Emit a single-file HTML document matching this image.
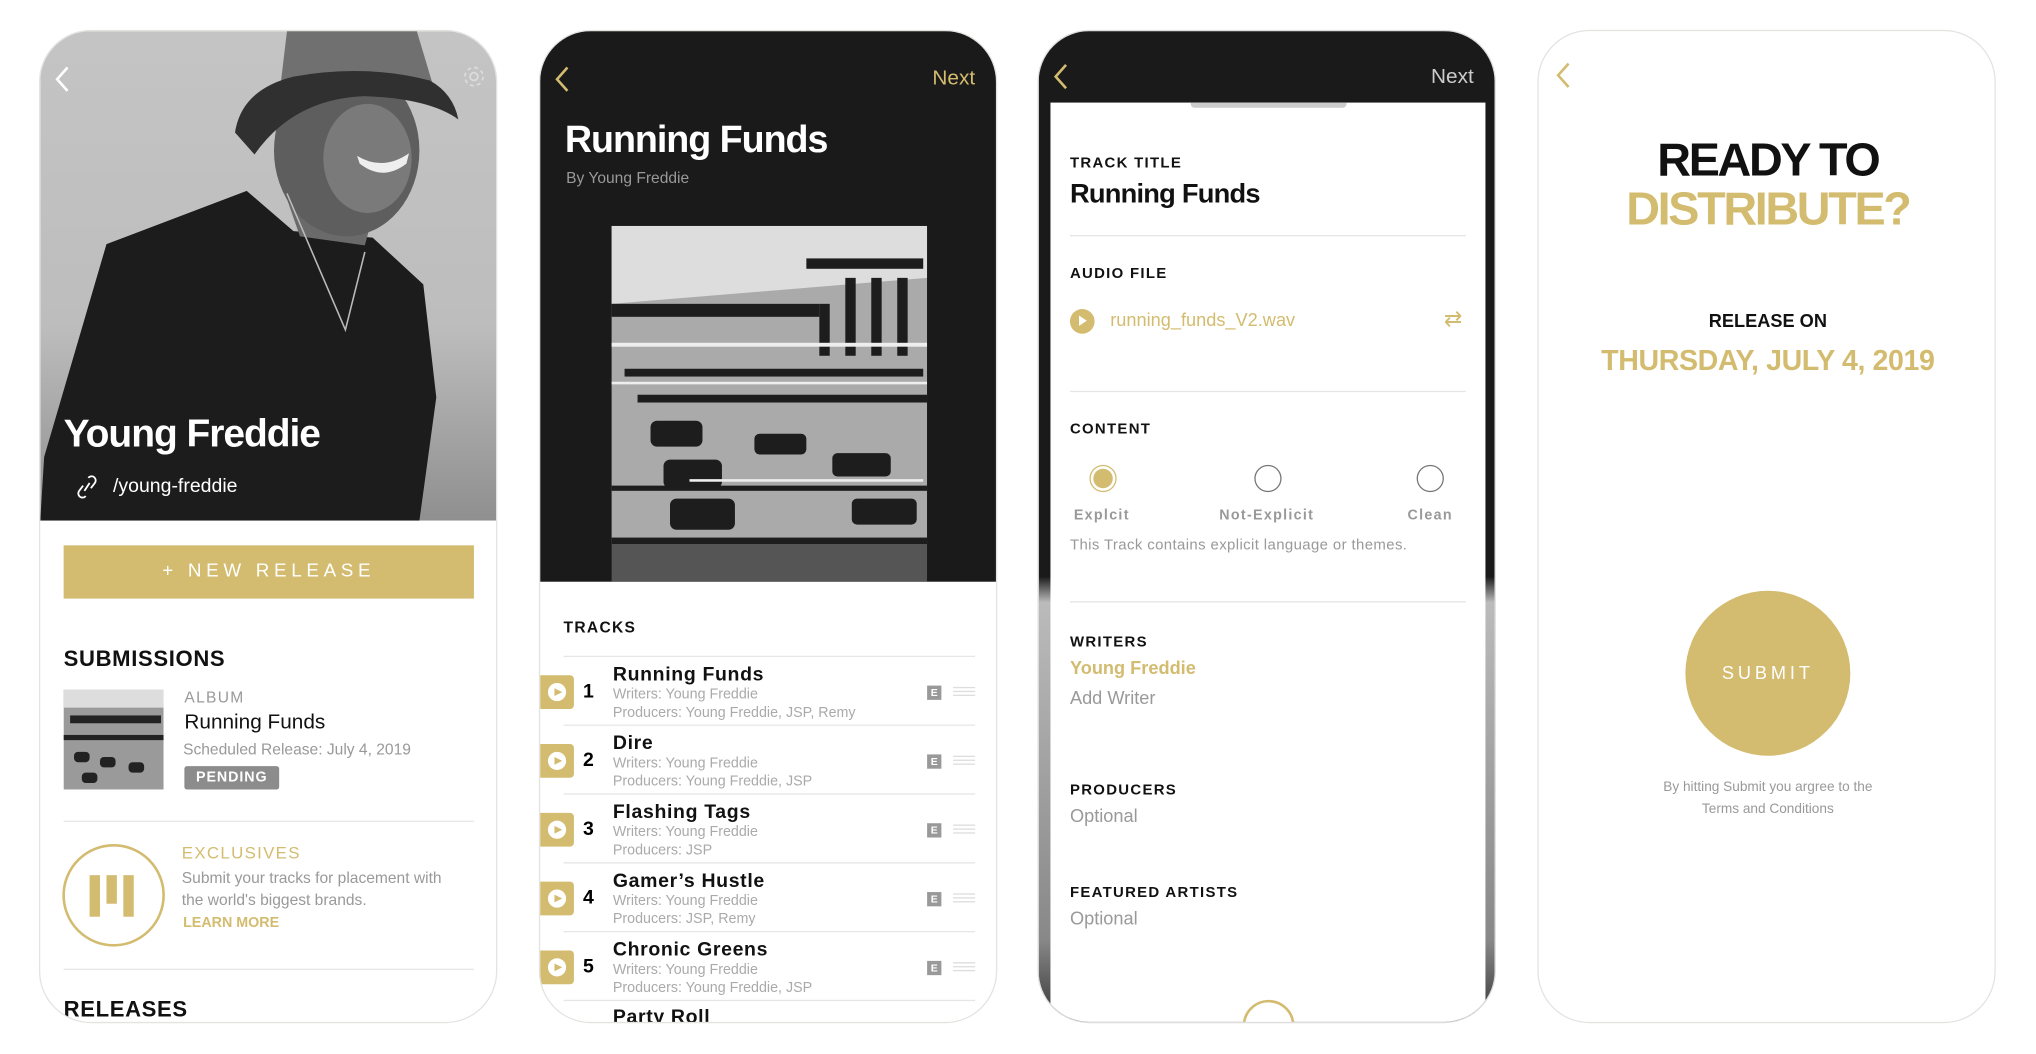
<!DOCTYPE html>
<html><head><meta charset="utf-8"><style>
*{margin:0;padding:0;box-sizing:border-box}
html,body{width:2036px;height:1054px;overflow:hidden;background:#fff}
body{font-family:"Liberation Sans",sans-serif}
#w{position:absolute;left:0;top:0;width:1568px;height:812px;transform:scale(1.29847);transform-origin:0 0}
.ph{position:absolute;top:23px;width:353px;height:765px;border-radius:40px;overflow:hidden;border:1px solid #e3e3e0;background:#fff}
.a{position:absolute;white-space:nowrap}
.g{color:#d3bc6f}
.lab{font-weight:bold;font-size:11.5px;letter-spacing:1px;color:#111}
.dv{position:absolute;height:1px;background:#e6e6e6}
.trk .tab{position:absolute;left:0;width:26px;height:26px;background:#d3bc6f;border-radius:0 3px 3px 0}
.trk .tab i{position:absolute;left:6px;top:6px;width:14px;height:14px;border-radius:50%;background:#fff}
.trk .tab i:after{content:"";position:absolute;left:5px;top:3.5px;border-left:6px solid #d3bc6f;border-top:3.5px solid transparent;border-bottom:3.5px solid transparent}
.eb{position:absolute;left:298px;width:11px;height:11px;background:#999;color:#fff;font-size:8px;font-weight:bold;text-align:center;line-height:11px}
.hb{position:absolute;left:318px;width:17px;height:7px;border-top:1px solid #ddd;border-bottom:1px solid #ddd}
.hb:after{content:"";position:absolute;left:0;top:2px;width:17px;border-top:1px solid #ddd}
</style></head><body><div id="w">

<!-- Phone 1 -->
<div class="ph" style="left:30px">
<svg class="a" style="left:0;top:0" width="353" height="377" viewBox="0 0 353 377">
<defs><linearGradient id="bg1" x1="0" y1="0" x2="0" y2="1"><stop offset="0" stop-color="#c4c4c4"/><stop offset="0.6" stop-color="#bdbdbd"/><stop offset="1" stop-color="#8f8f8f"/></linearGradient></defs>
<rect width="353" height="377" fill="url(#bg1)"/>
<path d="M3 328 L51 164 L159 123 L195 154 L256 159 L295 195 L305 282 L292 377 L0 377 Z" fill="#1c1c1c"/>
<path d="M185 115 L200 158 L250 165 L258 135 L235 115 Z" fill="#6a6a6a"/>
<ellipse cx="236" cy="92" rx="56" ry="66" fill="#5e5e5e"/>
<ellipse cx="252" cy="98" rx="34" ry="42" fill="#7a7a7a"/>
<path d="M244 96 Q264 108 284 94 L282 102 Q264 116 246 102 Z" fill="#eee"/>
<path d="M190 0 L290 0 L302 40 Q245 30 185 42 Z" fill="#707070"/>
<path d="M150 78 Q155 45 195 35 Q250 25 300 38 Q318 48 322 68 Q300 52 250 50 Q195 52 165 95 Z" fill="#303030"/>
<path d="M190 125 L235 230 L250 170" stroke="#bbb" stroke-width="1.2" fill="none"/>
</svg>
<svg class="a" style="left:10px;top:27px" width="14" height="20"><path d="M11 1 L3 10 L11 19" stroke="#fff" stroke-width="2" fill="none"/></svg>
<svg class="a" style="left:324px;top:25px" width="20" height="20" viewBox="0 0 20 20"><circle cx="10" cy="10" r="3" stroke="#ddd" stroke-width="1.3" fill="none"/><circle cx="10" cy="10" r="7" stroke="#ddd" stroke-width="1.3" fill="none" stroke-dasharray="3 2.5"/></svg>
<div class="a" style="left:18px;top:294px;font-size:30px;font-weight:bold;color:#fff;letter-spacing:-0.8px">Young Freddie</div>
<svg class="a" style="left:28px;top:342px" width="16" height="18" viewBox="0 0 16 18"><path d="M9 2 a3 3 0 0 1 5 4 L11 10 M7 16 a3 3 0 0 1 -5 -4 L5 8 M6 12 L10 6" stroke="#fff" stroke-width="1.4" fill="none"/></svg>
<div class="a" style="left:56px;top:342px;font-size:15px;color:#fff">/young-freddie</div>
<div class="a" style="left:18px;top:396px;width:316px;height:41px;background:#d3bc6f;color:#fff;font-size:14.5px;letter-spacing:3.6px;text-align:center;line-height:41px">+ NEW RELEASE</div>
<div class="a" style="left:18px;top:474px;font-size:17px;font-weight:bold;color:#111;letter-spacing:0.5px">SUBMISSIONS</div>
<svg class="a" style="left:18px;top:507px" width="77" height="77" viewBox="0 0 77 77"><rect width="77" height="77" fill="#9a9a9a"/><g fill="#222"><rect x="5" y="20" width="70" height="6"/><rect x="0" y="35" width="77" height="4"/><rect x="8" y="48" width="12" height="8" rx="3"/><rect x="28" y="52" width="12" height="8" rx="3"/><rect x="50" y="56" width="12" height="8" rx="3"/><rect x="14" y="64" width="12" height="8" rx="3"/></g><rect x="0" y="0" width="77" height="14" fill="#ddd"/></svg>
<div class="a" style="left:111px;top:506px;font-size:12px;color:#999;letter-spacing:1px">ALBUM</div>
<div class="a" style="left:111px;top:524px;font-size:16px;color:#111">Running Funds</div>
<div class="a" style="left:110px;top:546px;font-size:12px;color:#999">Scheduled Release: July 4, 2019</div>
<div class="a" style="left:111px;top:566px;width:73px;height:18px;background:#8c8c8c;border-radius:2px;color:#fff;font-size:11px;font-weight:bold;letter-spacing:0.7px;text-align:center;line-height:18px">PENDING</div>
<div class="dv" style="left:18px;top:608px;width:316px"></div>
<div class="a" style="left:17px;top:626px;width:79px;height:79px;border:2px solid #d3bc6f;border-radius:50%"></div>
<div class="a" style="left:38px;top:650px;width:8px;height:32px;background:#d3bc6f"></div>
<div class="a" style="left:51px;top:650px;width:8px;height:22px;background:#d3bc6f"></div>
<div class="a" style="left:64px;top:650px;width:8px;height:32px;background:#d3bc6f"></div>
<div class="a g" style="left:109px;top:625px;font-size:13px;letter-spacing:1px">EXCLUSIVES</div>
<div class="a" style="left:109px;top:644px;font-size:12px;color:#999;line-height:17px">Submit your tracks for placement with<br>the world's biggest brands.</div>
<div class="a g" style="left:110px;top:681px;font-size:11px;font-weight:bold">LEARN MORE</div>
<div class="dv" style="left:18px;top:722px;width:316px"></div>
<div class="a" style="left:18px;top:744px;font-size:17px;font-weight:bold;color:#111;letter-spacing:0.5px">RELEASES</div>
</div>

<!-- Phone 2 -->
<div class="ph" style="left:415px">
<div class="a" style="left:0;top:0;width:353px;height:424px;background:#1a1a1a"></div>
<svg class="a" style="left:10px;top:27px" width="14" height="20"><path d="M11 1 L3 10 L11 19" stroke="#d3bc6f" stroke-width="2" fill="none"/></svg>
<div class="a g" style="right:16px;top:28px;font-size:16px">Next</div>
<div class="a" style="left:19px;top:68px;font-size:29px;font-weight:bold;color:#fff;letter-spacing:-0.8px">Running Funds</div>
<div class="a" style="left:20px;top:106px;font-size:12px;color:#999">By Young Freddie</div>
<svg class="a" style="left:55px;top:150px" width="243" height="274" viewBox="0 0 243 274">
<rect width="243" height="274" fill="#555"/><rect width="243" height="245" fill="#aaa"/>
<path d="M0 0 L243 0 L243 40 L0 60 Z" fill="#ddd"/>
<g fill="#1d1d1d"><rect x="0" y="60" width="160" height="10"/><rect x="150" y="25" width="90" height="8"/>
<rect x="180" y="40" width="8" height="60"/><rect x="200" y="40" width="8" height="60"/><rect x="220" y="40" width="8" height="60"/><rect x="160" y="60" width="8" height="40"/>
<rect x="10" y="110" width="230" height="6"/><rect x="20" y="130" width="223" height="6"/>
<rect x="30" y="150" width="40" height="20" rx="5"/><rect x="40" y="180" width="45" height="22" rx="5"/><rect x="45" y="210" width="50" height="24" rx="5"/>
<rect x="110" y="160" width="40" height="16" rx="4"/><rect x="170" y="175" width="45" height="18" rx="4"/><rect x="185" y="210" width="50" height="20" rx="4"/>
<rect x="0" y="200" width="243" height="4"/><rect x="0" y="240" width="243" height="5"/></g>
<g fill="#eee"><rect x="0" y="90" width="243" height="3"/><rect x="0" y="120" width="243" height="2"/><rect x="60" y="195" width="180" height="2"/></g>
</svg>
<div class="a lab" style="left:18px;top:452px;font-size:12px">TRACKS</div>
<div class="trk">
<div class="dv" style="left:18px;top:481px;width:317px"></div>
<div class="tab" style="top:496px"><i></i></div><div class="a" style="left:33px;top:500px;font-size:15px;font-weight:bold">1</div>
<div class="a" style="left:56px;top:487px;font-size:15px;font-weight:bold;color:#111;letter-spacing:0.5px">Running Funds</div>
<div class="a" style="left:56px;top:504px;font-size:11px;color:#aaa;line-height:14px">Writers: Young Freddie<br>Producers: Young Freddie, JSP, Remy</div>
<div class="eb" style="top:504px">E</div><div class="hb" style="top:505px"></div>
<div class="dv" style="left:18px;top:534px;width:317px"></div>
<div class="tab" style="top:549px"><i></i></div><div class="a" style="left:33px;top:553px;font-size:15px;font-weight:bold">2</div>
<div class="a" style="left:56px;top:540px;font-size:15px;font-weight:bold;color:#111;letter-spacing:0.5px">Dire</div>
<div class="a" style="left:56px;top:557px;font-size:11px;color:#aaa;line-height:14px">Writers: Young Freddie<br>Producers: Young Freddie, JSP</div>
<div class="eb" style="top:557px">E</div><div class="hb" style="top:558px"></div>
<div class="dv" style="left:18px;top:587px;width:317px"></div>
<div class="tab" style="top:602px"><i></i></div><div class="a" style="left:33px;top:606px;font-size:15px;font-weight:bold">3</div>
<div class="a" style="left:56px;top:593px;font-size:15px;font-weight:bold;color:#111;letter-spacing:0.5px">Flashing Tags</div>
<div class="a" style="left:56px;top:610px;font-size:11px;color:#aaa;line-height:14px">Writers: Young Freddie<br>Producers: JSP</div>
<div class="eb" style="top:610px">E</div><div class="hb" style="top:611px"></div>
<div class="dv" style="left:18px;top:640px;width:317px"></div>
<div class="tab" style="top:655px"><i></i></div><div class="a" style="left:33px;top:659px;font-size:15px;font-weight:bold">4</div>
<div class="a" style="left:56px;top:646px;font-size:15px;font-weight:bold;color:#111;letter-spacing:0.5px">Gamer’s Hustle</div>
<div class="a" style="left:56px;top:663px;font-size:11px;color:#aaa;line-height:14px">Writers: Young Freddie<br>Producers: JSP, Remy</div>
<div class="eb" style="top:663px">E</div><div class="hb" style="top:664px"></div>
<div class="dv" style="left:18px;top:693px;width:317px"></div>
<div class="tab" style="top:708px"><i></i></div><div class="a" style="left:33px;top:712px;font-size:15px;font-weight:bold">5</div>
<div class="a" style="left:56px;top:699px;font-size:15px;font-weight:bold;color:#111;letter-spacing:0.5px">Chronic Greens</div>
<div class="a" style="left:56px;top:716px;font-size:11px;color:#aaa;line-height:14px">Writers: Young Freddie<br>Producers: Young Freddie, JSP</div>
<div class="eb" style="top:716px">E</div><div class="hb" style="top:717px"></div>
<div class="dv" style="left:18px;top:746px;width:317px"></div>
<div class="tab" style="top:761px"><i></i></div>
<div class="a" style="left:56px;top:751px;font-size:15px;font-weight:bold;color:#111;letter-spacing:0.5px">Party Roll</div>
</div>
</div>

<!-- Phone 3 -->
<div class="ph" style="left:799px;background:linear-gradient(#1a1a1a 0,#1a1a1a 420px,#bbb 440px,#888 700px,#333 765px);border-color:#ddd">
<svg class="a" style="left:10px;top:25px" width="14" height="20"><path d="M11 1 L3 10 L11 19" stroke="#d3bc6f" stroke-width="2" fill="none"/></svg>
<div class="a" style="right:16px;top:27px;font-size:16px;color:#ccc">Next</div>
<div class="a" style="left:9px;top:55px;width:335px;height:720px;background:#fff"></div>
<div class="a" style="left:117px;top:55px;width:120px;height:4px;background:#ccc;border-radius:0 0 3px 3px"></div>
<div class="a lab" style="left:24px;top:96px">TRACK TITLE</div>
<div class="a" style="left:24px;top:114px;font-size:21px;font-weight:bold;color:#111;letter-spacing:-0.6px">Running Funds</div>
<div class="dv" style="left:24px;top:157px;width:305px"></div>
<div class="a lab" style="left:24px;top:181px">AUDIO FILE</div>
<div class="a" style="left:24px;top:214px;width:19px;height:19px;border-radius:50%;background:#d3bc6f"></div>
<div class="a" style="left:31px;top:219px;border-left:6px solid #fff;border-top:4px solid transparent;border-bottom:4px solid transparent"></div>
<div class="a g" style="left:55px;top:214px;font-size:14px">running_funds_V2.wav</div>
<div class="a" style="left:312px;top:212px;font-size:17px;color:#d3bc6f">⇄</div>
<div class="dv" style="left:24px;top:277px;width:305px"></div>
<div class="a lab" style="left:24px;top:301px">CONTENT</div>
<div class="a" style="left:39px;top:334px;width:21px;height:21px;border-radius:50%;border:1px solid #d3bc6f;background:#fff"></div>
<div class="a" style="left:42px;top:337px;width:15px;height:15px;border-radius:50%;background:#d3bc6f"></div>
<div class="a" style="left:166px;top:334px;width:21px;height:21px;border-radius:50%;border:1px solid #777"></div>
<div class="a" style="left:291px;top:334px;width:21px;height:21px;border-radius:50%;border:1px solid #777"></div>
<div class="a" style="left:27px;top:367px;font-size:11px;font-weight:bold;color:#999;letter-spacing:1px">Explcit</div>
<div class="a" style="left:139px;top:367px;font-size:11px;font-weight:bold;color:#999;letter-spacing:1px">Not-Explicit</div>
<div class="a" style="left:284px;top:367px;font-size:11px;font-weight:bold;color:#999;letter-spacing:1px">Clean</div>
<div class="a" style="left:24px;top:390px;font-size:11.5px;color:#999;letter-spacing:0.3px">This Track contains explicit language or themes.</div>
<div class="dv" style="left:24px;top:439px;width:305px"></div>
<div class="a lab" style="left:24px;top:465px">WRITERS</div>
<div class="a g" style="left:24px;top:482px;font-size:14px;font-weight:bold">Young Freddie</div>
<div class="a" style="left:24px;top:505px;font-size:14px;color:#999">Add Writer</div>
<div class="a lab" style="left:24px;top:579px">PRODUCERS</div>
<div class="a" style="left:24px;top:596px;font-size:14px;color:#999">Optional</div>
<div class="a lab" style="left:24px;top:658px">FEATURED ARTISTS</div>
<div class="a" style="left:24px;top:675px;font-size:14px;color:#999">Optional</div>
<div class="a" style="left:157px;top:746px;width:40px;height:40px;border-radius:50%;border:2px solid #d3bc6f;background:#fff"></div>
</div>

<!-- Phone 4 -->
<div class="ph" style="left:1184px">
<svg class="a" style="left:12px;top:24px" width="14" height="20"><path d="M11 1 L3 10 L11 19" stroke="#d3bc6f" stroke-width="2" fill="none"/></svg>
<div class="a" style="left:0;width:353px;top:80px;text-align:center;font-size:36px;font-weight:bold;line-height:38px;letter-spacing:-1.8px;color:#111">READY TO<br><span class="g">DISTRIBUTE?</span></div>
<div class="a" style="left:0;width:353px;top:215px;text-align:center;font-size:14px;font-weight:bold;color:#111">RELEASE ON</div>
<div class="a g" style="left:0;width:353px;top:241px;text-align:center;font-size:22px;font-weight:bold;letter-spacing:-0.3px">THURSDAY, JULY 4, 2019</div>
<div class="a" style="left:113px;top:431px;width:127px;height:127px;border-radius:50%;background:#d3bc6f;color:#fff;text-align:center;line-height:127px;font-size:14px;letter-spacing:3px">SUBMIT</div>
<div class="a" style="left:0;width:353px;top:574px;text-align:center;font-size:10.5px;color:#999;line-height:17px">By hitting Submit you argree to the<br>Terms and Conditions</div>
</div>

</div></body></html>
